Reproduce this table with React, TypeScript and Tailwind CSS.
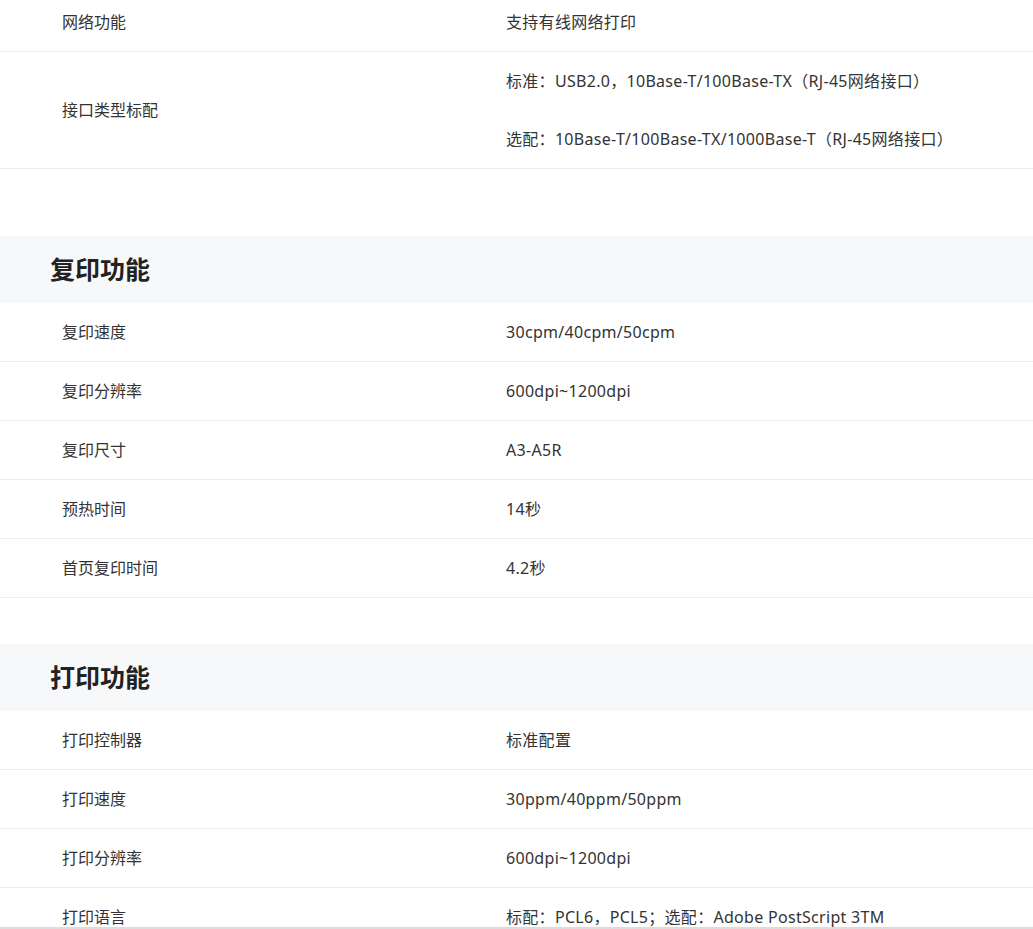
const font = { fontFamily: '"Noto Sans", "Noto Sans CJK SC", sans-serif' };

type Row = { label: string; values: string[] };

const network: Row[] = [
  { label: "网络功能", values: ["支持有线网络打印"] },
  {
    label: "接口类型标配",
    values: [
      "标准：USB2.0，10Base-T/100Base-TX（RJ-45网络接口）",
      "选配：10Base-T/100Base-TX/1000Base-T（RJ-45网络接口）",
    ],
  },
];

const copy: Row[] = [
  { label: "复印速度", values: ["30cpm/40cpm/50cpm"] },
  { label: "复印分辨率", values: ["600dpi~1200dpi"] },
  { label: "复印尺寸", values: ["A3-A5R"] },
  { label: "预热时间", values: ["14秒"] },
  { label: "首页复印时间", values: ["4.2秒"] },
];

const print: Row[] = [
  { label: "打印控制器", values: ["标准配置"] },
  { label: "打印速度", values: ["30ppm/40ppm/50ppm"] },
  { label: "打印分辨率", values: ["600dpi~1200dpi"] },
  { label: "打印语言", values: ["标配：PCL6，PCL5；选配：Adobe PostScript 3TM"] },
];

function SpecRow({ row }: { row: Row }) {
  return (
    <div className="grid grid-cols-[444px_1fr] pl-[62px] border-b border-[#ededed] text-[16px] text-[#333]">
      <div className="flex items-center">{row.label}</div>
      <div className="flex flex-col tracking-[0.3px]">
        {row.values.map((v, i) => (
          <div key={i} className="h-[58px] flex items-center">
            {v}
          </div>
        ))}
      </div>
    </div>
  );
}

function Section({ title, rows }: { title: string; rows: Row[] }) {
  return (
    <div>
      <div className="h-[67px] bg-[#f7f8fa] flex items-center pl-[50px]">
        <h2 className="text-[25px] font-bold text-[#222]">{title}</h2>
      </div>
      {rows.map((r) => (
        <SpecRow key={r.label} row={r} />
      ))}
    </div>
  );
}

export default function App() {
  return (
    <div
      className="h-[929px] overflow-hidden bg-white border-b-2 border-[#dcdcdc] box-border"
      style={font}
    >
      <div className="-mt-[7px]">
        {network.map((r) => (
          <SpecRow key={r.label} row={r} />
        ))}
      </div>
      <div className="mt-[67px]">
        <Section title="复印功能" rows={copy} />
      </div>
      <div className="mt-[46px]">
        <Section title="打印功能" rows={print} />
      </div>
    </div>
  );
}
